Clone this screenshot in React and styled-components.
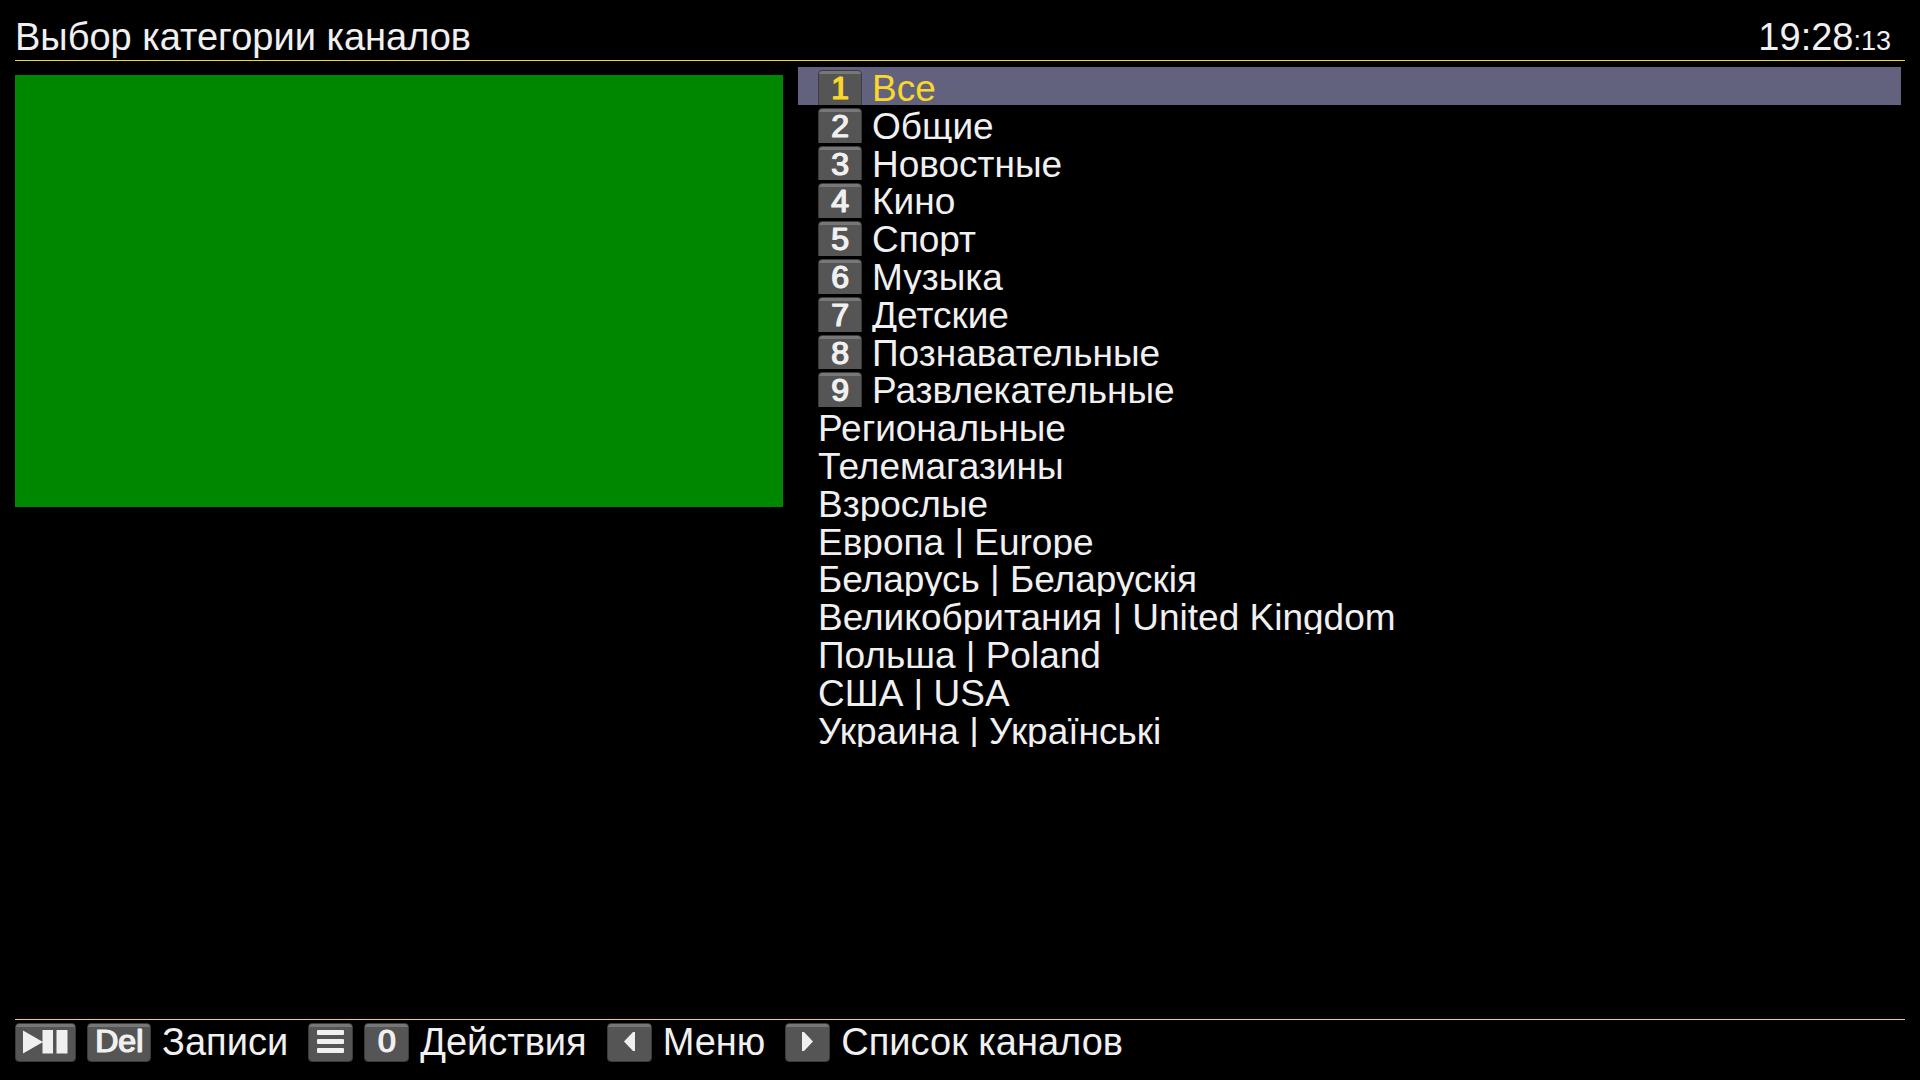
import React from "react";
import styled, { createGlobalStyle } from "styled-components";

const GlobalStyle = createGlobalStyle`
  *, *::before, *::after { box-sizing: border-box; }
  body {
    margin: 0;
    background: #000;
    color: #f0f0f0;
    font-family: "Liberation Sans", Arial, sans-serif;
    font-size: 38px;
  }
  button { font: inherit; color: inherit; border: 0; padding: 0; background: none; text-align: left; }
`;

const Screen = styled.div`
  display: flex;
  flex-direction: column;
  height: 100vh;
  padding: 0 15px;
  overflow: hidden;
`;

const Header = styled.header`
  display: flex;
  justify-content: space-between;
  align-items: baseline;
  height: 61px;
  padding: 15px 14px 0 0;
  border-bottom: 1px solid #f7d433;
  line-height: 44px;
`;

const Title = styled.h1`
  margin: 0;
  font-size: 38px;
  font-weight: 400;
`;

const Seconds = styled.span`
  font-size: 27px;
`;

const Main = styled.main`
  display: grid;
  grid-template-columns: 40vw 1fr;
  column-gap: 15px;
  flex: 1;
  min-height: 0;
  padding: 6px 4px 7px 0;
`;

const Preview = styled.section`
  align-self: start;
  aspect-ratio: 16 / 9;
  margin-top: 8px;
  background: #008700;
`;

const Categories = styled.ul`
  display: grid;
  grid-template-rows: repeat(25, minmax(0, 1fr));
  min-height: 0;
  margin: 0;
  padding: 0;
  list-style: none;
`;

const Category = styled.li`
  min-height: 0;
  overflow: hidden;
  background: ${(p) => (p.$active ? "#62627f" : "transparent")};
  color: ${(p) => (p.$active ? "#fcd72b" : "#f0f0f0")};
`;

const CategoryButton = styled.button`
  display: flex;
  align-items: flex-start;
  gap: 10px;
  width: 100%;
  padding-left: 20px;
  font-size: 37px;
  line-height: 43px;
  white-space: nowrap;
`;

const Key = styled.kbd`
  display: flex;
  flex: none;
  align-items: center;
  justify-content: center;
  min-width: ${(p) => (p.$small ? 44 : 45)}px;
  height: 39px;
  margin-top: ${(p) => (p.$small ? 3 : 0)}px;
  padding: ${(p) => (p.$small ? "0" : "0 7px")};
  border: 1px solid #3c3c3c;
  border-radius: 4px;
  background: linear-gradient(#777 0 3px, #555 3px);
  font-family: inherit;
  font-size: 32px;
  line-height: 34px;
  -webkit-text-stroke: 1px currentColor;
  text-shadow: 1px 0 currentColor;
`;

const KeyText = styled.span`
  height: 37px;
`;

const Footer = styled.footer`
  display: flex;
  align-items: flex-start;
  gap: 20px;
  height: 61px;
  padding-top: 3px;
  border-top: 1px solid #f7d433;
`;

const Action = styled.button`
  display: flex;
  align-items: flex-start;
  gap: 11px;
  line-height: 39px;
  white-space: nowrap;
`;

const Glyph = ({ width, children }) => (
  <svg width={width} height="37" viewBox={`0 0 ${width} 37`} fill="#f0f0f0" aria-hidden="true">
    {children}
  </svg>
);

const PlayPause = () => (
  <Glyph width={45}>
    <path d="M0 6.5l20 11.5L0 29.5zM19.5 6h10.5v23.5H19.5zM33.5 6h11v23.5h-11z" />
  </Glyph>
);

const MenuLines = () => (
  <Glyph width={27}>
    <rect y="6" width="27" height="5" rx="1" />
    <rect y="15" width="27" height="5" rx="1" />
    <rect y="24" width="27" height="5" rx="1" />
  </Glyph>
);

const ArrowLeft = () => (
  <Glyph width={11}>
    <path d="M0 17.5L9 8h2v19H9z" />
  </Glyph>
);

const ArrowRight = () => (
  <Glyph width={11}>
    <path d="M11 17.5L2 8H0v19h2z" />
  </Glyph>
);

const categories = [
  "Все",
  "Общие",
  "Новостные",
  "Кино",
  "Спорт",
  "Музыка",
  "Детские",
  "Познавательные",
  "Развлекательные",
  "Региональные",
  "Телемагазины",
  "Взрослые",
  "Европа | Europe",
  "Беларусь | Беларускія",
  "Великобритания | United Kingdom",
  "Польша | Poland",
  "США | USA",
  "Украина | Українські",
];

const actions = [
  { label: "Записи", keys: [<PlayPause />, "Del"] },
  { label: "Действия", keys: [<MenuLines />, "0"] },
  { label: "Меню", keys: [<ArrowLeft />] },
  { label: "Список каналов", keys: [<ArrowRight />] },
];

export default function App() {
  return (
    <>
      <GlobalStyle />
      <Screen>
        <Header>
          <Title>Выбор категории каналов</Title>
          <time>
            19:28<Seconds>:13</Seconds>
          </time>
        </Header>
        <Main>
          <Preview />
          <Categories>
            {categories.map((name, i) => (
              <Category key={name} $active={i === 0}>
                <CategoryButton type="button">
                  {i < 9 && (
                    <Key $small>
                      <KeyText>{i + 1}</KeyText>
                    </Key>
                  )}
                  <span>{name}</span>
                </CategoryButton>
              </Category>
            ))}
          </Categories>
        </Main>
        <Footer>
          {actions.map((action) => (
            <Action key={action.label} type="button">
              {action.keys.map((key, i) => (
                <Key key={i}>{typeof key === "string" ? <KeyText>{key}</KeyText> : key}</Key>
              ))}
              <span>{action.label}</span>
            </Action>
          ))}
        </Footer>
      </Screen>
    </>
  );
}
